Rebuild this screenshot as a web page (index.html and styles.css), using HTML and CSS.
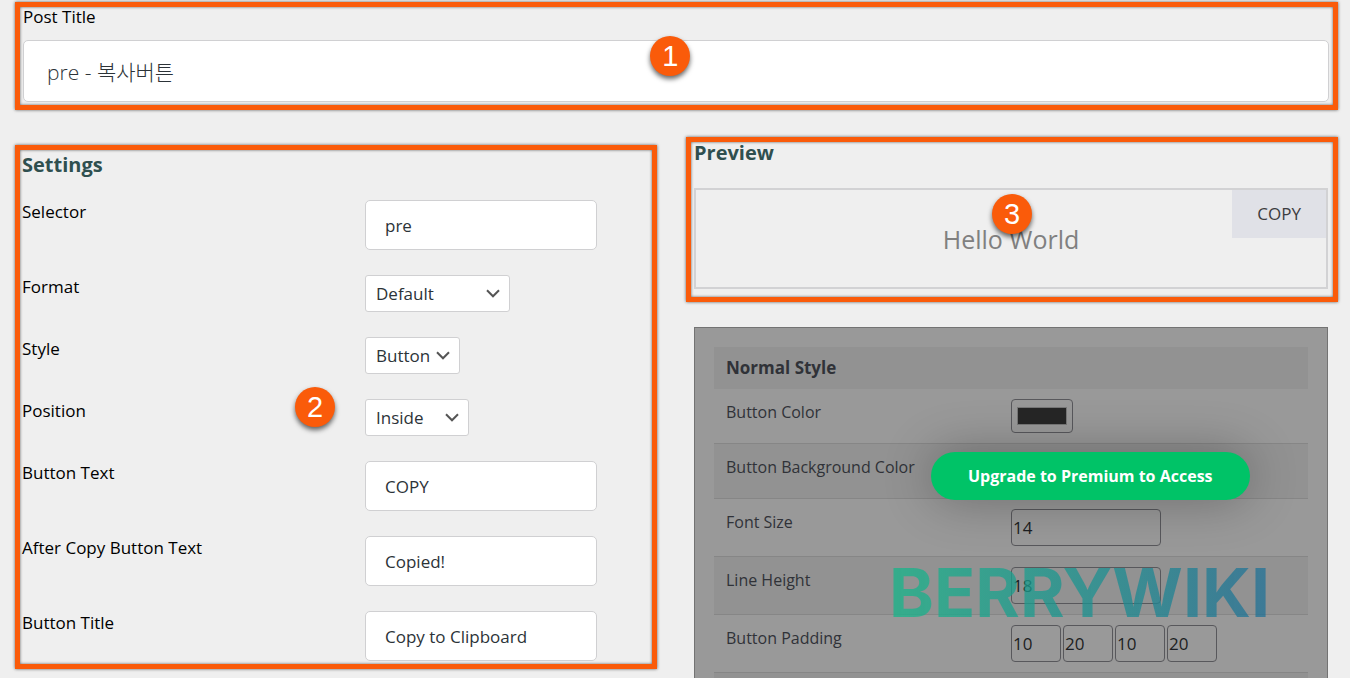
FILE: index.html
```html
<!DOCTYPE html>
<html lang="en">
<head>
<meta charset="utf-8">
<title>Copy Button Settings</title>
<link rel="stylesheet" href="styles.css">
</head>
<body>
<main class="page">
  <section class="frame frame-title">
    <label class="title-label" for="post-title">Post Title</label>
    <input class="title-input" id="post-title" type="text" value="pre - 복사버튼">
    <span class="badge badge-1">1</span>
  </section>

  <div class="columns">
    <section class="frame frame-settings">
      <h2 class="heading">Settings</h2>
      <div class="fields">
        <div class="field">
          <label class="field-label" for="selector">Selector</label>
          <input class="text-input" id="selector" type="text" value="pre">
        </div>
        <div class="field">
          <label class="field-label" for="format">Format</label>
          <div class="select-wrap select-large">
            <select class="select" id="format"><option>Default</option></select>
            <svg class="chevron" viewBox="0 0 14 9" aria-hidden="true"><path d="M1 1.300 7 7.300l6-6"/></svg>
          </div>
        </div>
        <div class="field">
          <label class="field-label" for="style">Style</label>
          <div class="select-wrap select-small">
            <select class="select" id="style"><option>Button</option></select>
            <svg class="chevron" viewBox="0 0 14 9" aria-hidden="true"><path d="M1 1.300 7 7.300l6-6"/></svg>
          </div>
        </div>
        <div class="field">
          <label class="field-label" for="position">Position</label>
          <div class="select-wrap select-medium">
            <select class="select" id="position"><option>Inside</option></select>
            <svg class="chevron" viewBox="0 0 14 9" aria-hidden="true"><path d="M1 1.300 7 7.300l6-6"/></svg>
          </div>
        </div>
        <div class="field">
          <label class="field-label" for="button-text">Button Text</label>
          <input class="text-input" id="button-text" type="text" value="COPY">
        </div>
        <div class="field">
          <label class="field-label" for="after-text">After Copy Button Text</label>
          <input class="text-input" id="after-text" type="text" value="Copied!">
        </div>
        <div class="field">
          <label class="field-label" for="button-title">Button Title</label>
          <input class="text-input" id="button-title" type="text" value="Copy to Clipboard">
        </div>
      </div>
      <span class="badge badge-2">2</span>
    </section>

    <div class="side">
      <section class="frame frame-preview">
        <h2 class="heading">Preview</h2>
        <div class="preview-box">
          <span class="preview-text">Hello World</span>
          <button class="copy-button" type="button">COPY</button>
        </div>
        <span class="badge badge-3">3</span>
      </section>

      <section class="premium">
        <table class="style-table">
          <thead>
            <tr><th colspan="2">Normal Style</th></tr>
          </thead>
          <tbody>
            <tr>
              <td><label for="color">Button Color</label></td>
              <td><input class="color-input" id="color" type="color" value="#262626"></td>
            </tr>
            <tr class="shaded">
              <td><label for="bg-color">Button Background Color</label></td>
              <td><input class="color-input" id="bg-color" type="color" value="#8c8c8e"></td>
            </tr>
            <tr>
              <td><label for="font-size">Font Size</label></td>
              <td><input class="number-input" id="font-size" type="text" value="14"></td>
            </tr>
            <tr class="shaded">
              <td><label for="line-height">Line Height</label></td>
              <td><input class="number-input" id="line-height" type="text" value="18"></td>
            </tr>
            <tr>
              <td><label for="pad-top">Button Padding</label></td>
              <td>
                <div class="pad-group">
                  <input class="pad-input" id="pad-top" type="text" value="10" aria-label="Padding top">
                  <input class="pad-input" type="text" value="20" aria-label="Padding right">
                  <input class="pad-input" type="text" value="10" aria-label="Padding bottom">
                  <input class="pad-input" type="text" value="20" aria-label="Padding left">
                </div>
              </td>
            </tr>
            <tr class="shaded"><td></td><td></td></tr>
          </tbody>
        </table>
        <a class="upgrade" href="#">Upgrade to Premium to Access</a>
        <span class="watermark">BERRYWIKI</span>
      </section>
    </div>
  </div>
</main>
</body>
</html>
```
FILE: styles.css
```css
* { box-sizing: border-box; }

body {
  margin: 0;
  background: #efefef;
  color: #000;
  font: 400 17px/24px "Open Sans", "Noto Sans CJK KR", sans-serif;
}

input, select, button { font: inherit; }

.page {
  height: 100vh;
  overflow: hidden;
  padding: 2px 12px 0 15px;
}

.frame {
  position: relative;
  border: 5px solid #fa5b0a;
  box-shadow: 0 0 3px rgba(0, 0, 0, .6), inset 0 0 3px rgba(0, 0, 0, .6);
}

.frame-title {
  display: flex;
  flex-direction: column;
  gap: 13px;
  padding: 0 4px 3px 3px;
}

.title-label { line-height: 20px; }

.title-input {
  width: 100%;
  height: 62px;
  padding: 0 23px;
  border: 1px solid #d0d0d2;
  border-radius: 5px;
  background: #fff;
  color: #2c3338;
  font-size: 21px;
  font-weight: 300;
}

.columns {
  display: grid;
  grid-template-columns: 642fr 652fr;
  align-items: start;
  gap: 29px;
  margin-top: 27px;
}

.frame-settings {
  margin-top: 8px;
  padding: 3px 2px;
}

.heading {
  margin: 0;
  color: #2f4f4f;
  font-size: 20px;
  font-weight: 700;
  line-height: 24px;
}

.fields {
  display: grid;
  gap: 25px;
  margin-top: 23px;
}

.field {
  display: grid;
  grid-template-columns: 343fr 285fr;
  align-items: start;
}

.text-input {
  width: 232px;
  height: 50px;
  padding: 0 19px;
  border: 1px solid #d0d0d2;
  border-radius: 5px;
  background: #fff;
  color: #2c3338;
}

.select-wrap { position: relative; }
.select-large { width: 145px; }
.select-medium { width: 104px; }
.select-small { width: 95px; }

.select {
  display: block;
  width: 100%;
  height: 37px;
  padding: 0 10px;
  appearance: none;
  border: 1px solid #d0d0d2;
  border-radius: 3px;
  background: #fff;
  color: #2c3338;
}

.chevron {
  position: absolute;
  top: 14px;
  right: 10px;
  width: 14px;
  height: 9px;
  fill: none;
  stroke: #555;
  stroke-width: 2;
  pointer-events: none;
}

.badge {
  position: absolute;
  display: grid;
  place-items: center;
  width: 40px;
  height: 40px;
  border-radius: 50%;
  background: #fa5b0a;
  box-shadow: 0 3px 5px rgba(0, 0, 0, .6);
  color: #fff;
  font: 29px/40px "Liberation Sans", sans-serif;
}

.badge-1 { top: 29px; left: 48%; }
.badge-2 { top: 237px; left: 275px; }
.badge-3 { top: 52px; left: 301px; }

.frame-preview { padding: 0 5px 8px 3px; }

.frame-preview .heading { line-height: 22px; }

.preview-box {
  position: relative;
  display: grid;
  place-items: center;
  height: 101px;
  margin-top: 24px;
  border: 2px solid #d2d2d4;
}

.preview-text {
  color: #808080;
  font-size: 25px;
  font-weight: 400;
}

.copy-button {
  position: absolute;
  top: 0;
  right: 0;
  padding: 12px 25px;
  border: 0;
  background: #e0e1e7;
  color: #3c3c40;
  font-size: 17px;
}

.premium {
  position: relative;
  height: 460px;
  margin: 25px 10px 0 8px;
  padding: 19px;
  border: 1px solid #737373;
  background: #999;
}

.style-table {
  width: 100%;
  border-collapse: collapse;
  table-layout: fixed;
  color: #303238;
  font-size: 16px;
}

.style-table th {
  height: 42px;
  padding: 0 12px;
  background: #929292;
  font-size: 17px;
  font-weight: 700;
  text-align: left;
}

.style-table td {
  padding: 11px 12px 10px;
  border-bottom: 1px solid #868686;
  vertical-align: top;
}

.style-table td + td { padding: 10px 0; }
.shaded { background: #929292; }

.color-input {
  display: block;
  width: 62px;
  height: 34px;
  padding: 3px;
  border: 1px solid #58585c;
  border-radius: 4px;
  background: #999;
}

.number-input, .pad-input {
  display: block;
  width: 150px;
  height: 37px;
  padding: 0 1px;
  border: 1px solid #58585c;
  border-radius: 4px;
  background: transparent;
  color: #1c1e22;
  font-size: 17px;
}

.pad-group {
  display: flex;
  gap: 2px;
}

.pad-input { width: 50px; }

.upgrade {
  position: absolute;
  top: 124px;
  left: 236px;
  padding: 12px 37px;
  border-radius: 24px;
  background: #00c367;
  box-shadow: 0 0 50px rgba(0, 0, 0, .3);
  color: #fff;
  font-size: 16px;
  font-weight: 700;
  text-decoration: none;
  white-space: nowrap;
}

.watermark {
  position: absolute;
  top: 232px;
  left: 194px;
  background: linear-gradient(90deg, #1cb58ac8, #1c6f97b8);
  background-clip: text;
  -webkit-background-clip: text;
  color: transparent;
  font: 700 68px/64px Inter, sans-serif;
  pointer-events: none;
}
```
